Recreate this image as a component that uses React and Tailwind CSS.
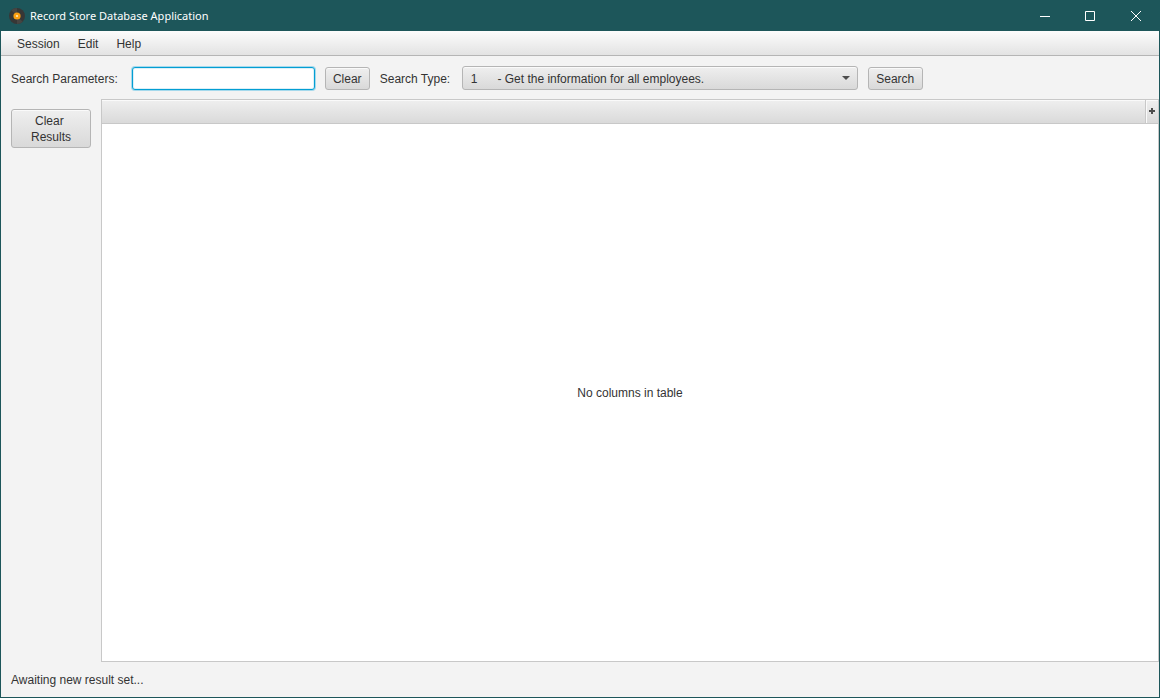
import React, { useState } from 'react';

const searchTypes = [
  '1\u00a0\u00a0\u00a0\u00a0\u00a0\u00a0- Get the information for all employees.',
];

const buttonStyle =
  'rounded-[3px] border border-[#b5b5b5] bg-linear-to-b from-[#efefef] to-[#d9d9d9] shadow-[inset_0_1px_0_#fafafa] hover:from-[#f7f7f7] hover:to-[#e4e4e4]';

const RecordIcon = () => (
  <svg width="16" height="16" viewBox="0 0 16 16" aria-hidden="true">
    <circle cx="8" cy="8" r="8" fill="#373736" />
    <path d="M8 8L2.3 2.3A8 8 0 0 1 8 0zM8 8l5.7 5.7A8 8 0 0 1 8 16z" fill="#474542" />
    <circle cx="8" cy="8" r="3.6" fill="#fb9f12" />
    <circle cx="8" cy="8" r="1" fill="#fff0c8" />
  </svg>
);

const TitleBar = () => (
  <header className="flex h-[30px] items-center bg-[#1d565a] pl-2 text-white">
    <RecordIcon />
    <h1 className="ml-1 flex-1 pl-px font-['Noto_Sans',sans-serif] text-[11px]">
      Record Store Database Application
    </h1>
    <button aria-label="Minimize" className="flex h-full w-11 items-center justify-center hover:bg-white/10">
      <svg width="10" height="10" viewBox="0 0 10 10" stroke="currentColor">
        <path d="M0 5.5h10" />
      </svg>
    </button>
    <button aria-label="Maximize" className="flex h-full w-[46px] items-center justify-center hover:bg-white/10">
      <svg width="10" height="10" viewBox="0 0 10 10" fill="none" stroke="currentColor">
        <path d="M.5.5h9v9h-9z" />
      </svg>
    </button>
    <button aria-label="Close" className="flex h-full w-[46px] items-center justify-center hover:bg-red-600">
      <svg width="10" height="10" viewBox="0 0 10 10" stroke="currentColor">
        <path d="M0 0l10 10M10 0L0 10" />
      </svg>
    </button>
  </header>
);

const MenuBar = () => (
  <nav className="flex h-[25px] items-center border-b border-[#b5b5b5] bg-linear-to-b from-[#fcfcfc] to-[#e3e3e3] px-[7px]">
    {['Session', 'Edit', 'Help'].map((item) => (
      <button key={item} className="h-full px-[9px] pt-[2px] hover:bg-[#0096c9] hover:text-white">
        {item}
      </button>
    ))}
  </nav>
);

const SearchBar = () => {
  const [params, setParams] = useState('');

  return (
    <div className="flex items-end gap-[10px] px-[10px] pt-[10px] pb-[9px]">
      <label htmlFor="params" className="mr-1 self-center pt-[2px] whitespace-nowrap">
        Search Parameters:
      </label>
      <input
        id="params"
        type="text"
        value={params}
        onChange={(e) => setParams(e.target.value)}
        className="h-[23px] w-[183px] rounded-[3px] border border-[#039ed3] bg-white px-[7px] shadow-[0_0_0_1px_#a5d9ec,inset_0_0_0_1px_#dceff7] outline-none"
      />
      <button onClick={() => setParams('')} className={`h-[23px] w-[45px] pt-px ${buttonStyle}`}>
        Clear
      </button>
      <label htmlFor="type" className="w-[72px] self-center pt-[2px] whitespace-nowrap">
        Search Type:
      </label>
      <div className="relative w-[396px]">
        <select id="type" className={`block h-6 w-full appearance-none pt-[2px] pr-6 pl-2 ${buttonStyle}`}>
          {searchTypes.map((type) => (
            <option key={type}>{type}</option>
          ))}
        </select>
        <svg
          width="8"
          height="4"
          viewBox="0 0 8 4"
          className="pointer-events-none absolute top-[10px] right-2"
          aria-hidden="true"
        >
          <path d="M0 0h8L4 4z" fill="#4d4d4d" />
        </svg>
      </div>
      <button className={`h-[23px] w-[55px] pt-px ${buttonStyle}`}>Search</button>
    </div>
  );
};

const ResultTable = () => (
  <table className="flex-1 border-separate border-spacing-0 border border-[#c8c8c8] bg-white">
    <thead>
      <tr className="h-6 bg-linear-to-b from-[#efefef] to-[#d9d9d9]">
        <th className="border-b border-[#c8c8c8] p-0 shadow-[inset_0_1px_0_#fafafa]" />
        <th className="w-[13px] border-b border-l border-[#c8c8c8] p-0 align-top shadow-[inset_1px_1px_0_#fafafa]">
          <button aria-label="Choose columns" className="flex h-[22px] w-full items-center justify-center">
            <svg width="6" height="6" viewBox="0 0 6 6" fill="#4d4d4d">
              <path d="M2 0h2v2h2v2H4v2H2V4H0V2h2z" />
            </svg>
          </button>
        </th>
      </tr>
    </thead>
    <tbody>
      <tr>
        <td colSpan={2} className="p-0 text-center">
          No columns in table
        </td>
      </tr>
    </tbody>
  </table>
);

export default function App() {
  return (
    <div className="flex min-h-screen flex-col border border-[#1d565a] bg-[#f3f3f3] font-['Liberation_Sans',Arial,sans-serif] text-[12px] leading-4 text-[#333333]">
      <TitleBar />
      <MenuBar />
      <SearchBar />
      <main className="flex flex-1">
        <aside className="p-[10px]">
          <button className={`h-[39px] w-20 ${buttonStyle}`}>
            Clear&nbsp;
            <br />
            Results
          </button>
        </aside>
        <ResultTable />
      </main>
      <footer className="px-[10px] pt-[10px] pb-[9px]">Awaiting new result set...</footer>
    </div>
  );
}
